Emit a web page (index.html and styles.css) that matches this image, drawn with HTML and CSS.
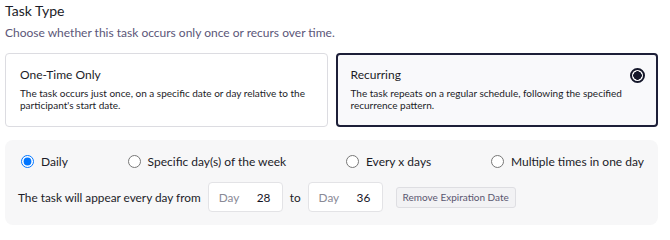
FILE: index.html
```html
<!DOCTYPE html>
<html lang="en">
<head>
  <meta charset="UTF-8">
  <title>Task Type</title>
  <link rel="stylesheet" href="styles.css">
</head>
<body>
  <div class="page">
    <h1 class="title">Task Type</h1>
    <p class="subtitle">Choose whether this task occurs only once or recurs over time.</p>

    <div class="cards">
      <div class="card">
        <div class="card-head">
          <span class="card-title">One-Time Only</span>
        </div>
        <p class="card-text">The task occurs just once, on a specific date or day relative to the participant's start date.</p>
      </div>
      <div class="card selected">
        <div class="card-head">
          <span class="card-title">Recurring</span>
          <span class="dot"></span>
        </div>
        <p class="card-text">The task repeats on a regular schedule, following the specified recurrence pattern.</p>
      </div>
    </div>

    <div class="panel">
      <div class="options">
        <label class="option"><input type="radio" name="freq" checked> Daily</label>
        <label class="option"><input type="radio" name="freq"> Specific day(s) of the week</label>
        <label class="option"><input type="radio" name="freq"> Every x days</label>
        <label class="option"><input type="radio" name="freq"> Multiple times in one day</label>
      </div>
      <div class="range">
        <span>The task will appear every day from</span>
        <div class="day-box"><span class="day-label">Day</span><span class="day-num">28</span></div>
        <span>to</span>
        <div class="day-box"><span class="day-label">Day</span><span class="day-num">36</span></div>
        <button class="remove">Remove Expiration Date</button>
      </div>
    </div>
  </div>
</body>
</html>
```

FILE: styles.css
```css
body {
  margin: 0;
  font-family: Lato, "Noto Sans", sans-serif;
  color: #1c1c28;
  background: #fff;
}

.page {
  width: 653px;
  padding: 2px 0 0 5px;
}

.title {
  font-size: 14px;
  font-weight: 400;
  line-height: 18px;
  margin: 0;
}

.subtitle {
  font-size: 12px;
  line-height: 16px;
  color: #5b5678;
  margin: 5px 0 0;
}

.cards {
  display: grid;
  grid-template-columns: 1fr 1fr;
  gap: 8px;
  margin-top: 12px;
}

.card {
  height: 74px;
  box-sizing: border-box;
  border: 1.5px solid #dcdce1;
  border-radius: 4px;
  padding: 10px 14px 0;
  background: #fff;
}

.card.selected {
  border: 2px solid #1d1f38;
  background: #f9f9fb;
  padding: 9px 13px 0;
}

.card-head {
  display: flex;
  justify-content: space-between;
  align-items: center;
  height: 20px;
}

.card-title {
  font-size: 12px;
}

.dot {
  width: 11px;
  height: 11px;
  border: 2.5px solid #15172a;
  border-radius: 50%;
  background: radial-gradient(circle, #15172a 0 4px, #fff 4.5px);
  margin: 2px -2px 0 0;
}

.card-text {
  font-size: 10px;
  line-height: 12px;
  margin: 3px 0 0;
}

.panel {
  margin-top: 13px;
  background: #f7f7f8;
  border-radius: 8px;
  padding: 11px 13px 13px;
}

.options {
  display: flex;
  justify-content: space-between;
  align-items: center;
  height: 20px;
  padding-right: 1px;
}

.option {
  display: flex;
  align-items: center;
  font-size: 12px;
}

.option input {
  margin: 0 7px 0 3px;
}

.range {
  display: flex;
  align-items: center;
  gap: 7px;
  margin-top: 11px;
  font-size: 11.8px;
}

.day-box {
  display: flex;
  align-items: center;
  width: 75px;
  height: 30px;
  box-sizing: border-box;
  background: #fff;
  border: 1px solid #e3e3e6;
  border-radius: 4px;
  padding: 0 10px;
}

.day-label {
  color: #8a8a96;
  width: 38px;
}

.day-num {
  color: #14141f;
}

.remove {
  margin-left: 6px;
  height: 21px;
  padding: 0 6px;
  font-family: inherit;
  font-size: 10px;
  color: #5a5670;
  background: #f2f2f4;
  border: 1px solid #dedee2;
  border-radius: 3px;
}
```
